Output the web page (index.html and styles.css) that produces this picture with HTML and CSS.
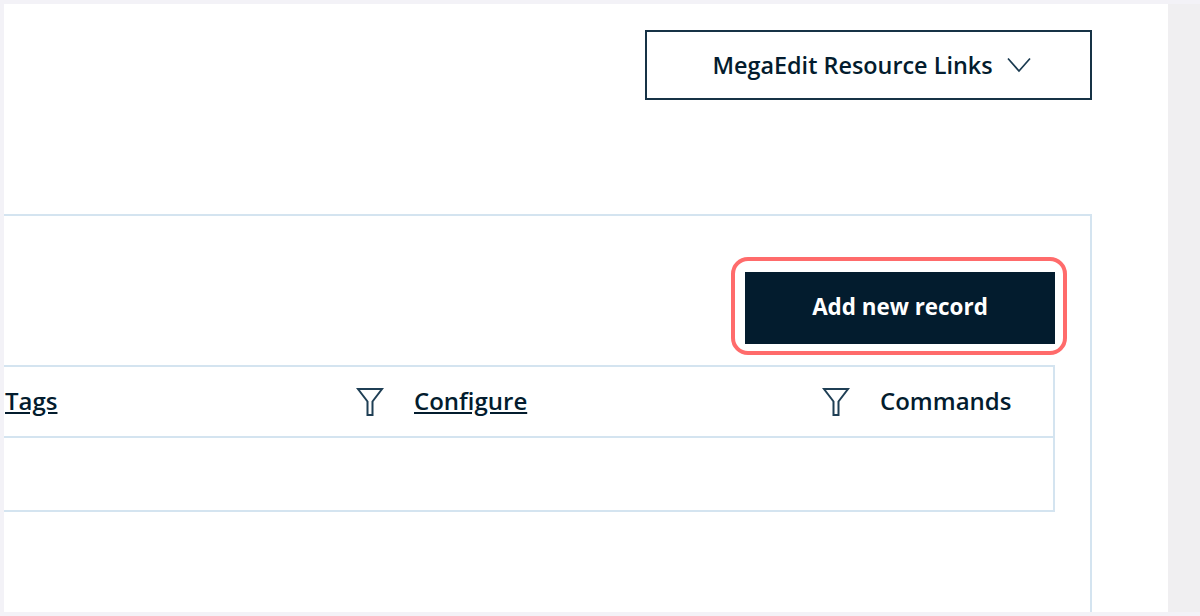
FILE: index.html
```html
<!DOCTYPE html>
<html lang="en">
<head>
<meta charset="utf-8">
<title>MegaEdit</title>
<link rel="stylesheet" href="styles.css">
</head>
<body>
<div class="frame">
  <main class="panel">
    <div class="top-bar">
      <button class="links-btn" type="button">
        <span>MegaEdit Resource Links</span>
        <svg class="chevron" viewBox="0 0 24 16" width="24" height="16"><path d="M1 1.5 12 14 23 1.5" fill="none" stroke="#1a3a50" stroke-width="1.7"/></svg>
      </button>
    </div>
    <section class="card">
      <div class="toolbar">
        <div class="add-wrap">
          <button class="add-btn" type="button">Add new record</button>
        </div>
      </div>
      <div class="grid">
        <div class="grid-head">
          <div class="cell cell-tags">
            <a href="#" class="col-link">Tags</a>
            <svg class="filter" viewBox="0 0 28 30" width="28" height="30"><path d="M2 2H26L16.5 14.5V28H11.5V14.5Z" fill="#fff" stroke="#1f3f55" stroke-width="2"/></svg>
          </div>
          <div class="cell cell-config">
            <a href="#" class="col-link">Configure</a>
            <svg class="filter" viewBox="0 0 28 30" width="28" height="30"><path d="M2 2H26L16.5 14.5V28H11.5V14.5Z" fill="#fff" stroke="#1f3f55" stroke-width="2"/></svg>
          </div>
          <div class="cell cell-commands">Commands</div>
        </div>
        <div class="grid-row"></div>
      </div>
    </section>
  </main>
  <div class="gutter"></div>
</div>
</body>
</html>
```
FILE: styles.css
```css
* { box-sizing: border-box; }
html, body { margin: 0; height: 100%; }
body {
  background: #f3f2f7;
  font-family: "Open Sans", "Noto Sans", sans-serif;
  color: #031c2e;
  overflow: hidden;
}
.frame {
  height: 616px;
  padding: 4px 0 4px 4px;
  display: flex;
}
.panel {
  background: #fff;
  width: 1164px;
  height: 608px;
  padding: 26px 76px 0 0;
  display: flex;
  flex-direction: column;
}
.gutter {
  flex: 1;
  background: #f0eff1;
}
.top-bar {
  display: flex;
  justify-content: flex-end;
  height: 184px;
}
.links-btn {
  width: 447px;
  height: 70px;
  background: #fff;
  border: 2px solid #163246;
  font: 600 23.4px "Open Sans", sans-serif;
  color: #031c2e;
  display: flex;
  align-items: center;
  justify-content: center;
  gap: 14px;
  padding: 0 0 0 6px;
}
.card {
  flex: 1;
  border: 2px solid #d4e4f0;
  border-left: 0;
  border-bottom: 0;
  padding: 56px 35px 0 0;
}
.toolbar {
  display: flex;
  justify-content: flex-end;
  height: 93px;
}
.add-wrap {
  position: relative;
  width: 310px;
  height: 72px;
}
.add-wrap::after {
  content: "";
  position: absolute;
  top: -15px;
  right: -12px;
  bottom: -11px;
  left: -14px;
  border: 4.5px solid #ff6b6b;
  border-radius: 17px;
  pointer-events: none;
}
.add-btn {
  width: 100%;
  height: 100%;
  background: #031c2e;
  color: #fff;
  border: 0;
  font: 700 22.4px "Open Sans", sans-serif;
  padding: 0 0 3px;
}
.grid {
  border: 2px solid #d4e4f0;
  border-left: 0;
}
.grid-head {
  display: grid;
  grid-template-columns: 410px 466px 1fr;
  height: 71px;
  border-bottom: 2px solid #d4e4f0;
}
.cell {
  display: flex;
  align-items: center;
  justify-content: space-between;
  font-weight: 600;
  font-size: 24px;
}
.cell-tags { padding: 0 30px 0 1px; }
.cell-config { padding: 0 30px 0 0; }
.cell-commands { padding-bottom: 3px; }
.col-link { color: #031c2e; margin-bottom: 3px; }
.filter { display: block; }
.grid-row { height: 72px; }
```
